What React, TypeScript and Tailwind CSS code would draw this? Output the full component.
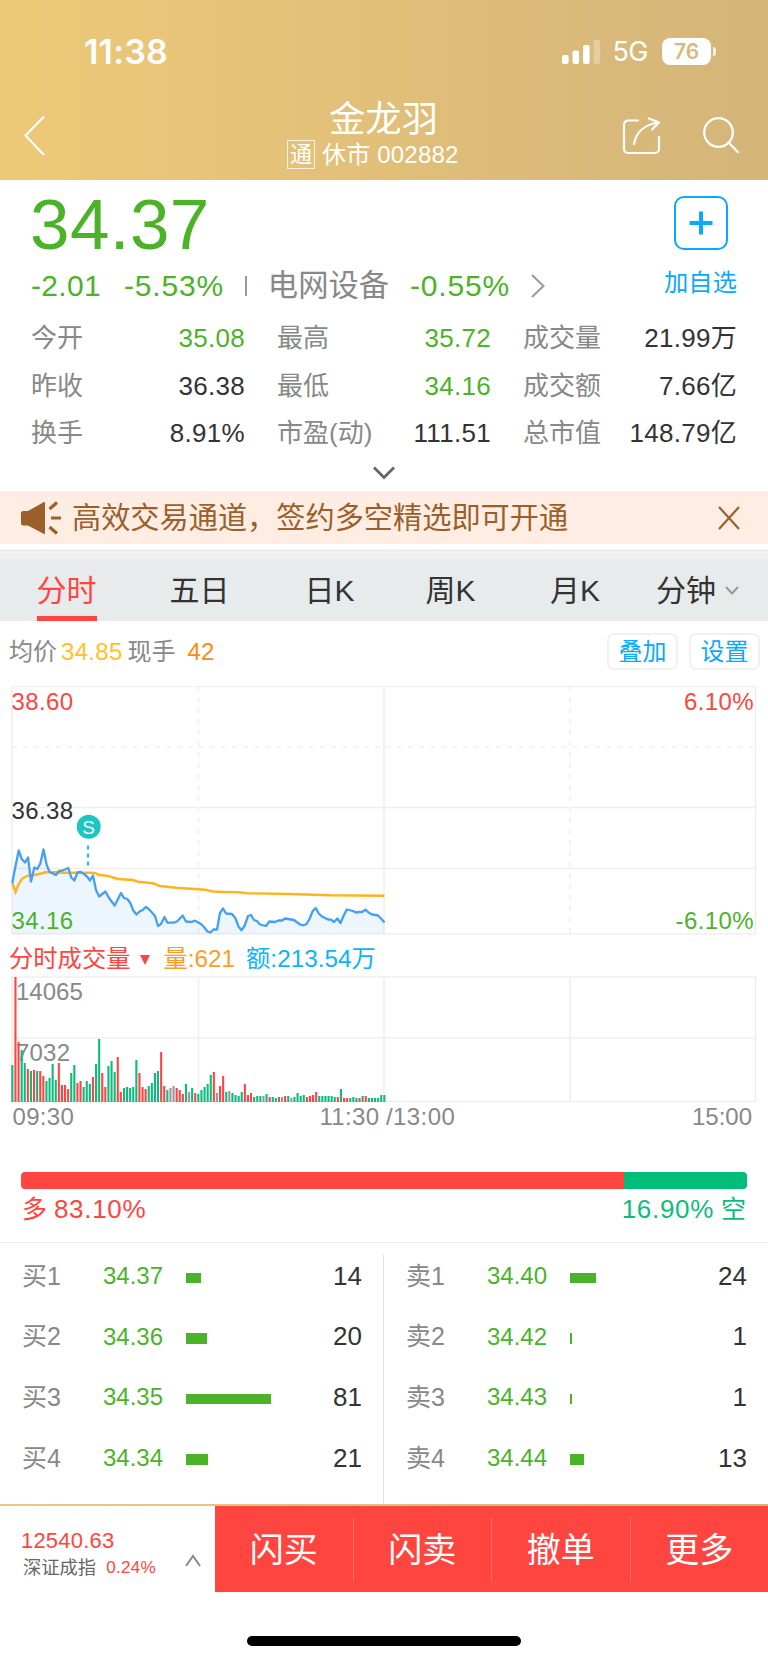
import { Fragment } from "react";

type Level = { label: string; price: string; size: number; bar: number };

const STATS = [
  { label: "今开", value: "35.08", down: true },
  { label: "最高", value: "35.72", down: true },
  { label: "成交量", value: "21.99万" },
  { label: "昨收", value: "36.38" },
  { label: "最低", value: "34.16", down: true },
  { label: "成交额", value: "7.66亿" },
  { label: "换手", value: "8.91%" },
  { label: "市盈(动)", value: "111.51" },
  { label: "总市值", value: "148.79亿" },
];

const BIDS: Level[] = [
  { label: "买1", price: "34.37", size: 14, bar: 14.5 },
  { label: "买2", price: "34.36", size: 20, bar: 21 },
  { label: "买3", price: "34.35", size: 81, bar: 85 },
  { label: "买4", price: "34.34", size: 21, bar: 22 },
];

const ASKS: Level[] = [
  { label: "卖1", price: "34.40", size: 24, bar: 26 },
  { label: "卖2", price: "34.42", size: 1, bar: 1.5 },
  { label: "卖3", price: "34.43", size: 1, bar: 1.5 },
  { label: "卖4", price: "34.44", size: 13, bar: 14 },
];

const PRICE_LINE =
  "12.3,883 15.5,866 18.7,850.5 21.8,859 25,862.5 28,857.5 31,881.5 34.3,867.5 37.3,869 40.3,863.5 43.5,849.5 46.7,865 49.7,872 56,875 59,871 62,870.7 68.3,868 71.3,877.5 74.3,880.5 77.5,872.5 80.7,872 84,874 87,876.5 90,880.5 93,875.5 96,890 99.2,896.5 105.5,891.5 109,898 114.7,905.5 121,893 124,898 127.3,899 130.3,903 133.3,910.5 136.5,914.5 139.5,911.5 142.7,910 145.7,907 149,909.3 155,916 158,926 161,924 164.5,917 167.5,922.7 173.5,922.7 177,921.5 182.7,915.5 186,921.5 191.5,922 195,920.7 201,924 204,927 207.5,931.5 210.5,932.5 213.5,929.5 217,929.5 220,913 223,908.5 226,913.5 232,914 235.3,918 238.5,926.5 241.5,930.3 244.7,925.5 248,916 251,915 254,920 257,921 260,924.5 266,926 269.3,921.5 275,922 278.5,920.5 282,920.5 285,918.5 288,919 294,920 297.3,922.5 300.5,924.7 303.5,925.3 306.5,924 309.5,919 312.7,911 315.7,908 318.7,913.5 322,916.5 328,919.5 331,919.7 334,922 337.3,918.5 340.5,923 343.5,916 346.7,909.5 353,911 356,912.5 359,912 362,912 365.5,909.7 368.5,912.5 372,914.5 378,915.5 381,918.5 384.5,922.5";

const AVG_LINE =
  "12.3,883 15.5,892 18.7,884 21.8,879 25,877 28,875.7 37,874.5 43,873 46,872 56,872.3 62,872.7 90,872.7 95,873 99,875 107,875.7 118,879 133,880 138,881.7 153,883.3 160,886 176,887.7 205,889.7 213,891.5 225,892 238,892.3 247,893.2 290,894 330,895.3 384.5,895.7";

// one entry per minute: tick colour + height in px
const VOLUME =
  "g37 r125 r60 g52 g39 r33 g31 r32 g31 r31 r26 g21 g24 g38 g22 r39 r17 r17 r13 g29 g37 r19 r21 g15 g21 g18 r25 g38 g63 r29 r15 g36 g41 g30 r45 r10 g14 g15 g14 g15 g42 r29 r15 r13 g16 g19 g29 g31 r50 r16 g12 k14 k16 r14 r12 r8 g18 k10 g14 r9 g8 g12 g15 g18 g27 r30 k9 r16 r26 g10 k11 g9 g7 g6 g10 r18 r7 r9 g5 g6 g6 k6 g8 r5 g5 g4 r5 k5 r6 g6 k4 g5 g9 g6 g7 r5 r6 r7 r10 g6 g6 g6 g6 g6 g5 r5 g13 r4 r4 g4 g5 g4 r4 g6 r6 g4 g4 g4 g4 g7 g7"
    .split(" ")
    .map((v) => ({ tone: v[0], h: Number(v.slice(1)) }));

const TONES: Record<string, string> = { g: "#0fba7e", r: "#fb4645", k: "#999999" };

function StatusBar() {
  return (
    <div className="flex h-[103px] items-center pl-[84px] pr-[52px] text-white">
      <span className="font-[Inter] text-[34px] leading-none font-semibold tracking-[0.2px]">11:38</span>
      <div className="ml-auto flex items-center">
        <svg width="39" height="26" viewBox="0 0 39 26" fill="#fff">
          <rect x="0" y="16" width="6.600" height="9" rx="2" />
          <rect x="10.500" y="11.500" width="6.600" height="13.500" rx="2" />
          <rect x="21" y="6" width="6.600" height="19" rx="2" />
          <rect x="31.500" y="1" width="6.600" height="24" rx="2" opacity=".3" />
        </svg>
        <span className="ml-[11px] font-[Inter] text-[27px] leading-none tracking-[-0.5px]">5G</span>
        <div className="ml-[14px] flex h-[27px] w-[49px] items-center justify-center rounded-[8px] bg-white font-[Inter] text-[21px] leading-none font-semibold text-[#d8b97c]">
          76
        </div>
        <div className="ml-[2px] h-[9px] w-[3px] rounded-r-full bg-white/80" />
      </div>
    </div>
  );
}

function Header() {
  return (
    <header className="h-[180px] bg-linear-to-r from-[#edc977] to-[#d4b57a] text-white">
      <StatusBar />
      <div className="flex h-[77px] px-[24px]">
        <svg className="mt-[12px]" width="22" height="42" viewBox="0 0 22 42" fill="none" stroke="#fff" strokeWidth="2">
          <path d="M20 1.500 1.500 20.500 20 40" />
        </svg>
        <div className="ml-[241px] w-[193px] pt-px">
          <h1 className="text-center text-[36.300px] leading-[31px]">金龙羽</h1>
          <div className="mt-[5px] flex items-center text-[24px] leading-[29px] whitespace-nowrap">
            <span className="mr-[7px] flex h-[29px] w-[28px] items-center justify-center border border-white/80 text-[22px]">
              通
            </span>
            <span className="tracking-[0.2px]">休市 002882</span>
          </div>
        </div>
        <svg className="mt-[13px] ml-auto" width="40" height="40" viewBox="0 0 40 40" fill="none" stroke="#fff" strokeWidth="2.200" strokeLinecap="round" strokeLinejoin="round">
          <path d="M16 4.500H6a4 4 0 0 0-4 4v24.500a4 4 0 0 0 4 4h27a4 4 0 0 0 4-4V21" />
          <path d="M12 28C14 17 22 8.500 36.500 6.500M27 2.500l10 4-7 7" />
        </svg>
        <svg className="mt-[13px] mr-[4px] ml-[40px]" width="38" height="40" viewBox="0 0 38 40" fill="none" stroke="#fff" strokeWidth="2.200" strokeLinecap="round">
          <circle cx="16.500" cy="16.500" r="14.300" />
          <path d="m26.800 26.800 9 9.200" />
        </svg>
      </div>
    </header>
  );
}

function Quote() {
  return (
    <section className="relative h-[311px] px-8 pt-[13px]">
      <div className="-ml-[2px] text-[71px] leading-[64px] tracking-[0.4px] text-[#4cb329]">34.37</div>
      <div className="mt-[14px] -ml-px flex h-[30px] items-center text-[30px] leading-[30px] whitespace-nowrap text-[#4cb329]">
        <span className="w-[93px] tracking-[0.3px]">-2.01</span>
        <span className="tracking-[0.8px]">-5.53%</span>
        <span className="ml-[21px] h-[20px] w-[2px] bg-[#999]" />
        <span className="ml-[21px] text-[30.300px] text-[#888]">电网设备</span>
        <span className="ml-[21px] tracking-[0.8px]">-0.55%</span>
        <svg className="ml-[21px]" width="14" height="24" viewBox="0 0 14 24" fill="none" stroke="#999" strokeWidth="2">
          <path d="m1 1 11.500 11L1 23" />
        </svg>
      </div>
      <dl className="mt-[14px] -mr-px -ml-px grid grid-cols-3 gap-x-8 text-[26px] leading-[47.700px]">
        {STATS.map((s) => (
          <div key={s.label} className="flex justify-between whitespace-nowrap">
            <dt className="text-[#888]">{s.label}</dt>
            <dd className={`tracking-[0.3px] ${s.down ? "text-[#4cb329]" : "text-[#333]"}`}>{s.value}</dd>
          </div>
        ))}
      </dl>
      <svg className="mx-auto mt-[8px]" width="22" height="14" viewBox="0 0 22 14" fill="none" stroke="#666" strokeWidth="2.800">
        <path d="m1 1.500 10 10 10-10" />
      </svg>

      <button className="absolute top-[16px] right-[31px] flex w-[73px] flex-col items-center text-[#0aa8ff]">
        <span className="flex h-[54px] w-[54px] items-center justify-center rounded-[10px] border-2 border-[#0aa8ff]">
          <svg width="24" height="24" viewBox="0 0 24 24" stroke="currentColor" strokeWidth="4">
            <path d="M12 .5v23M.5 12h23" />
          </svg>
        </span>
        <span className="mt-[18px] text-[24.300px] leading-[30px] whitespace-nowrap">加自选</span>
      </button>
    </section>
  );
}

function Notice() {
  return (
    <div className="flex h-[53px] items-center bg-[#ffede4] pr-[28px] pl-[21px] text-[#9b5f2a]">
      <svg width="41" height="34" viewBox="0 -1 41 34" fill="none" stroke="currentColor" strokeWidth="3.200">
        <path d="M0 11q0-2 2-2h5L23 0q1-.5 1 1v30q0 1.500-1 1L7 23.500H2q-2 0-2-2z" fill="currentColor" stroke="none" />
        <path d="m28.500 7 7.500-6.500M30 16h10M28.500 25l7.500 6.500" />
      </svg>
      <span className="ml-[10px] pt-[2px] text-[29.200px] leading-none">高效交易通道，签约多空精选即可开通</span>
      <svg className="ml-auto" width="22" height="24" viewBox="0 0 22 24" fill="none" stroke="currentColor" strokeWidth="2.200">
        <path d="m1 1 20 22M21 1 1 23" />
      </svg>
    </div>
  );
}

function Tabs() {
  return (
    <nav className="flex h-[62px] items-center bg-[#e8ebec] text-[30px] text-[#333]">
      <div className="flex h-full w-[133px] justify-center">
        <span className="flex h-full items-center border-b-[5px] border-[#ff4540] pt-[5px] text-[#ff4540]">分时</span>
      </div>
      <div className="w-[133px] text-center">五日</div>
      <div className="w-[127px] text-center">日K</div>
      <div className="w-[115px] text-center">周K</div>
      <div className="w-[134px] text-center">月K</div>
      <div className="flex items-center pl-[14px]">
        分钟
        <svg className="ml-[9px]" width="14" height="9" viewBox="0 0 14 9" fill="none" stroke="#999" strokeWidth="2">
          <path d="m1 1 6 6.500L13 1" />
        </svg>
      </div>
    </nav>
  );
}

function ChartInfo() {
  return (
    <div className="flex h-[65px] items-center pr-[8px] pb-[4px] pl-[9px] text-[24px] text-[#888]">
      <span>均价</span>
      <span className="ml-[4px] tracking-[0.3px] text-[#ffc125]">34.85</span>
      <span className="ml-[5px]">现手</span>
      <span className="ml-[12px] text-[#ff8a0c]">42</span>
      <button className="ml-auto h-[37px] w-[71px] rounded-[7px] border-2 border-[#f1f1f1] leading-[33px] text-[#0aa8ff]">叠加</button>
      <button className="ml-[11px] h-[37px] w-[71px] rounded-[7px] border-2 border-[#f1f1f1] leading-[33px] text-[#0aa8ff]">设置</button>
    </div>
  );
}

function PriceChart() {
  return (
    <svg className="block" width="768" height="254" viewBox="0 686 768 254" fill="none" fontSize="24">
      <g stroke="#efefef" strokeWidth="2">
        <path d="M12 686.500H755.500V934H12zM12 807.500H755M12 868.500H755M384 686V934" strokeWidth="1.600" />
        <path d="M12 747H755M198.500 686V934M570 686V934" strokeWidth="1.600" strokeDasharray="5 6" />
      </g>
      <polygon points={`12.300,934 ${PRICE_LINE} 384.500,934`} fill="#3b9af5" fillOpacity=".09" />
      <polyline points={AVG_LINE} stroke="#ffb31f" strokeWidth="2.400" />
      <polyline points={PRICE_LINE} stroke="#459ff2" strokeWidth="2.300" strokeLinejoin="round" />
      <g letterSpacing=".4">
        <text x="11.500" y="709.500" fill="#ff4540">38.60</text>
        <text x="11.500" y="819" fill="#333">36.38</text>
        <text x="11.500" y="928.500" fill="#4cb329">34.16</text>
        <text x="754" y="709.500" fill="#ff4540" textAnchor="end">6.10%</text>
        <text x="754" y="928.500" fill="#4cb329" textAnchor="end">-6.10%</text>
      </g>
      <path d="M88 845.500V868" stroke="#1bc5c0" strokeWidth="2" strokeDasharray="4 4" />
      <circle cx="88.700" cy="826.700" r="12" fill="#1bc5c0" />
      <text x="88.500" y="833.500" fill="#fff" fontSize="19" textAnchor="middle">S</text>
    </svg>
  );
}

function VolumeChart() {
  return (
    <>
      <div className="flex h-[36px] items-center pt-[2px] pl-[9px] text-[24.300px] whitespace-nowrap">
        <span className="text-[#ff4540]">分时成交量</span>
        <svg className="mt-[2px] ml-[10px]" width="10" height="10" viewBox="0 0 10 10" fill="#ff4540">
          <path d="M0 0h10L5 10z" />
        </svg>
        <span className="ml-[13px] text-[#ff9c26]">量:621</span>
        <span className="ml-[11px] text-[#0ab4ff]">额:213.54万</span>
      </div>
      <svg className="block" width="768" height="159" viewBox="0 976 768 159" fontSize="24" fill="#888">
        <path d="M12 977H755.500V1101.500H12zM12 1038H755M198.500 977V1101M384 977V1101M570 977V1101" fill="none" stroke="#efefef" strokeWidth="1.600" />
        <text x="16" y="1000">14065</text>
        <text x="16" y="1061" letterSpacing=".2">7032</text>
        {VOLUME.map((v, i) => (
          <rect key={i} x={11.3 + i * 3.1} y={1102 - v.h} width="2.100" height={v.h} fill={TONES[v.tone]} />
        ))}
        <text x="12.500" y="1125" letterSpacing=".3">09:30</text>
        <text x="319.500" y="1125" letterSpacing=".3">11:30</text>
        <text x="386" y="1125" letterSpacing=".4">/13:00</text>
        <text x="752" y="1125" textAnchor="end">15:00</text>
      </svg>
    </>
  );
}

function Ratio() {
  return (
    <section className="h-[108px] border-b border-[#ececec] px-[21px] pt-[37px]">
      <div className="flex h-[17px] overflow-hidden rounded-[4px]">
        <div className="w-[83.100%] bg-[#ff4540]" />
        <div className="flex-1 bg-[#00bd79]" />
      </div>
      <div className="mt-[3px] flex justify-between pr-px pl-px text-[25px] leading-[34px]">
        <span className="text-[#ff4540]">
          多 <span className="text-[26px] tracking-[0.7px]">83.10%</span>
        </span>
        <span className="text-[#0dbd7c]">
          <span className="text-[26px] tracking-[0.7px]">16.90%</span> 空
        </span>
      </div>
    </section>
  );
}

function LevelRow({ level }: { level: Level }) {
  return (
    <div className="flex h-[60.600px] items-center text-[26px] text-[#333]">
      <span className="w-[81px] text-[#888]"><span className="text-[25px]">{level.label}</span></span>
      <span className="w-[83px] text-[24px] text-[#4cb329]">{level.price}</span>
      <span className="mt-[3px] h-[10.500px] bg-[#4cb329]" style={{ width: level.bar }} />
      <span className="ml-auto">{level.size}</span>
    </div>
  );
}

function OrderBook() {
  return (
    <section className="flex h-[261px] pt-[11px]">
      <div className="-mt-[8px] w-[383px] pr-[21px] pl-[22px]">
        {BIDS.map((l) => (
          <LevelRow key={l.label} level={l} />
        ))}
      </div>
      <div className="w-[1px] bg-[#e2e2e2]" />
      <div className="-mt-[8px] flex-1 pr-[21px] pl-[22px]">
        {ASKS.map((l) => (
          <LevelRow key={l.label} level={l} />
        ))}
      </div>
    </section>
  );
}

function TradeBar() {
  return (
    <footer>
      <div className="h-[2px] bg-linear-to-r from-[#edc977] to-[#d4b57a]" />
      <div className="flex h-[86px]">
        <div className="flex w-[215px] items-end justify-between pr-[14px] pb-[10px] pl-[21px]">
          <div className="whitespace-nowrap text-[#ff4540]">
            <div className="text-[22px] leading-[27px] tracking-[0.2px]">12540.63</div>
            <div className="flex items-center pl-[2px] text-[18.300px] leading-[28px]">
              <span className="text-[#666]">深证成指</span>
              <span className="ml-[10px] text-[17px] tracking-[0.3px]">0.24%</span>
            </div>
          </div>
          <svg className="mb-[15px]" width="16" height="13" viewBox="0 0 16 13" fill="none" stroke="#888" strokeWidth="2">
            <path d="m1 12 7-10 7 10" />
          </svg>
        </div>
        <div className="flex flex-1 items-center bg-[#ff4540] text-[34px] text-white">
          {["闪买", "闪卖", "撤单", "更多"].map((name, i) => (
            <Fragment key={name}>
              {i > 0 && <div className="h-[66px] w-[1px] bg-white/20" />}
              <button className="flex-1 pt-[3px]">{name}</button>
            </Fragment>
          ))}
        </div>
      </div>
      <div className="flex h-[71px] justify-center pt-[44px]">
        <div className="h-[10px] w-[274px] rounded-full bg-black" />
      </div>
    </footer>
  );
}

export default function App() {
  return (
    <div className="h-[1663px] w-[768px] overflow-hidden bg-white font-['Liberation_Sans','Noto_Sans_CJK_SC',sans-serif]">
      <Header />
      <Quote />
      <Notice />
      <div className="mt-[5px] h-[10px] bg-[#f0f0f0]" />
      <Tabs />
      <ChartInfo />
      <PriceChart />
      <VolumeChart />
      <Ratio />
      <OrderBook />
      <TradeBar />
    </div>
  );
}
